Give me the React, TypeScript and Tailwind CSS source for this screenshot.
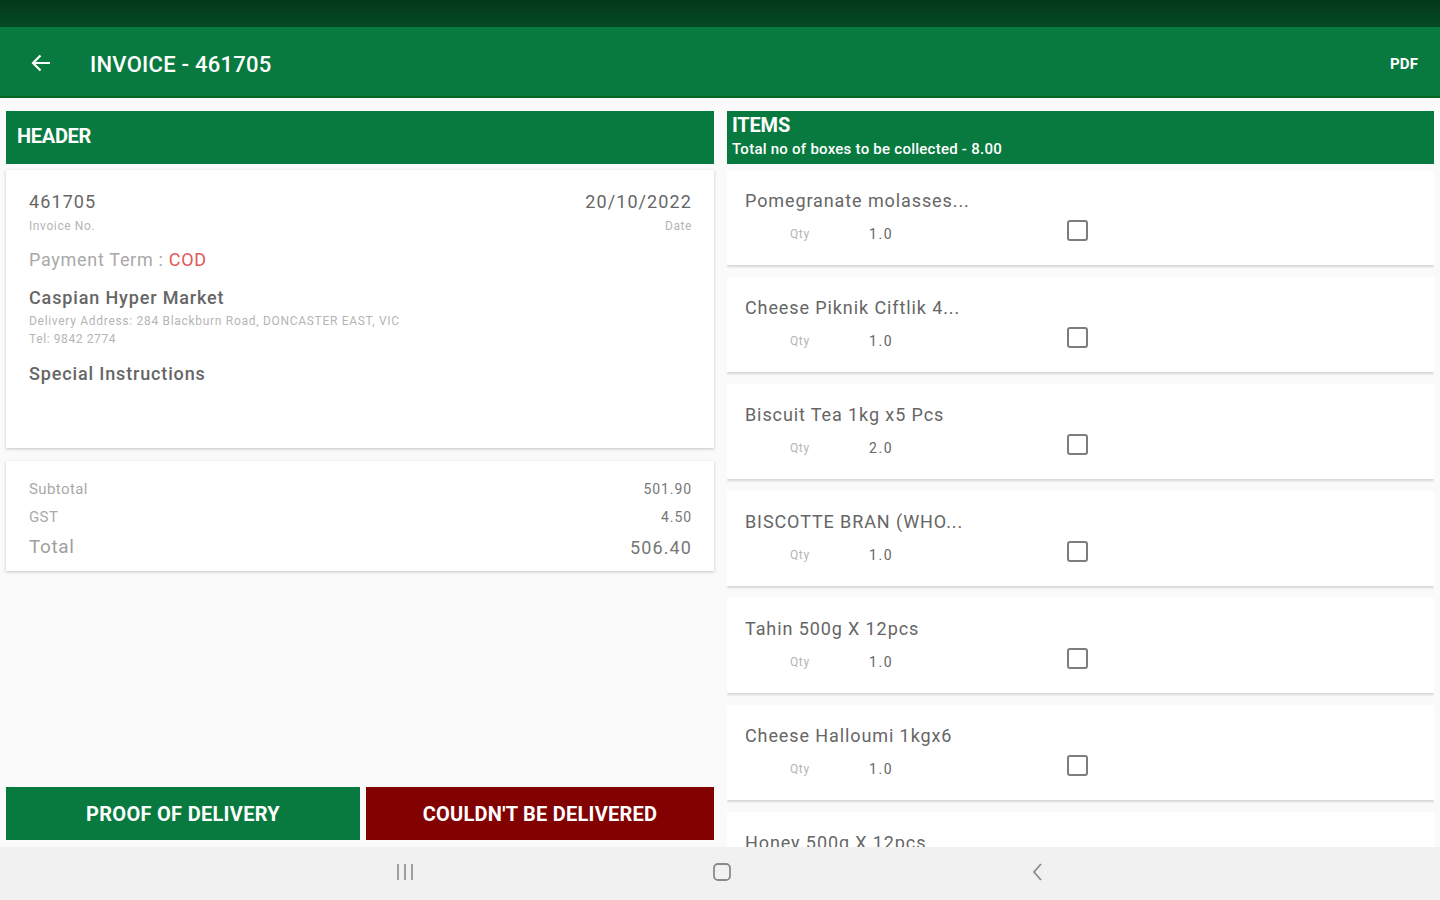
const items = [
  { name: 'Pomegranate molasses...', qty: '1.0' },
  { name: 'Cheese Piknik Ciftlik 4...', qty: '1.0' },
  { name: 'Biscuit Tea 1kg x5 Pcs', qty: '2.0' },
  { name: 'BISCOTTE BRAN (WHO...', qty: '1.0' },
  { name: 'Tahin 500g X 12pcs', qty: '1.0' },
  { name: 'Cheese Halloumi 1kgx6', qty: '1.0' },
  { name: 'Honey 500g X 12pcs', qty: '1.0' },
];

function ItemCard({ name, qty }: { name: string; qty: string }) {
  return (
    <div className="h-[95px] shrink-0 bg-white shadow-[0_2px_2px_rgba(0,0,0,0.14)]">
      <div className="pl-[18px] pt-[20px] text-[18px] leading-[22px] tracking-[0.9px] text-[#666666]">{name}</div>
      <div className="mt-[14px] flex items-center">
        <span className="ml-[63px] w-[79px] text-[12px] leading-[16px] tracking-[0.6px] text-[#b5b5b5]">Qty</span>
        <span className="w-[198px] text-[14px] leading-[16px] tracking-[1.6px] text-[#666666]">{qty}</span>
        <span className="-mt-[7px] h-[21px] w-[21px] rounded-[3px] border-2 border-[#7d7d7d]" />
      </div>
    </div>
  );
}

export default function App() {
  return (
    <div className="flex h-screen flex-col overflow-hidden bg-[#fafafa] font-['Roboto',sans-serif]">
      <div className="h-[27px] shrink-0 bg-gradient-to-b from-[#04381c] to-[#034a22]" />

      <header className="flex h-[71px] shrink-0 items-center border-b-2 border-[#05691f] bg-[#087a3f] pt-[2px] text-white">
        <svg className="ml-[30px] h-[22px] w-[22px]" viewBox="0 0 22 22" fill="none" stroke="currentColor" strokeWidth="2.2">
          <path d="M20 11H3M10.5 3.5 3 11l7.5 7.5" />
        </svg>
        <h1 className="ml-[38px] mt-[4px] text-[22px] font-medium tracking-[0.25px]">INVOICE - 461705</h1>
        <span className="ml-auto mr-[22px] mt-[4px] text-[15px] font-bold tracking-[0.1px]">PDF</span>
      </header>

      <main className="flex min-h-0 flex-1 gap-[13px] pl-[6px] pr-[6px] pt-[13px]">
        <section className="flex w-[708px] shrink-0 flex-col pb-[7px]">
          <div className="flex h-[53px] shrink-0 items-center bg-[#087a3f] pb-[4px] pl-[11px] text-[20px] font-bold tracking-[-0.3px] text-white">
            HEADER
          </div>

          <div className="mt-[6px] h-[278px] shrink-0 bg-white pl-[23px] pr-[22px] pt-[20px] shadow-[0_1px_3px_rgba(0,0,0,0.22)]">
            <div className="flex justify-between text-[18px] leading-[24px] tracking-[1.1px] text-[#666666]">
              <span>461705</span>
              <span>20/10/2022</span>
            </div>
            <div className="flex justify-between text-[12px] leading-[24px] tracking-[0.6px] text-[#b5b5b5]">
              <span>Invoice No.</span>
              <span>Date</span>
            </div>
            <div className="mt-[10px] text-[18px] leading-[24px] tracking-[0.7px] text-[#a9a9a9]">
              Payment Term : <span className="text-[#e2585a]">COD</span>
            </div>
            <div className="mt-[14px] text-[18px] font-medium leading-[24px] tracking-[0.85px] text-[#666666]">Caspian Hyper Market</div>
            <div className="mt-[2px] text-[12px] leading-[18px] tracking-[0.7px] text-[#b5b5b5]">
              Delivery Address: 284 Blackburn Road, DONCASTER EAST, VIC
            </div>
            <div className="text-[12px] leading-[18px] tracking-[0.6px] text-[#b5b5b5]">Tel: 9842 2774</div>
            <div className="mt-[14px] text-[18px] font-medium leading-[24px] tracking-[0.85px] text-[#666666]">Special Instructions</div>
          </div>

          <div className="mt-[13px] h-[110px] shrink-0 bg-white pl-[23px] pr-[22px] pt-[14px] shadow-[0_1px_3px_rgba(0,0,0,0.22)]">
            <div className="flex h-[28px] items-center justify-between text-[15px] tracking-[0.4px] text-[#a9a9a9]">
              <span>Subtotal</span>
              <span className="text-[14px] tracking-[0.9px] text-[#777777]">501.90</span>
            </div>
            <div className="flex h-[28px] items-center justify-between text-[15px] tracking-[0.4px] text-[#a9a9a9]">
              <span>GST</span>
              <span className="text-[14px] tracking-[0.9px] text-[#777777]">4.50</span>
            </div>
            <div className="flex h-[32px] items-center justify-between text-[19px] tracking-[0.6px] text-[#a0a0a0]">
              <span>Total</span>
              <span className="text-[18px] tracking-[1.1px] text-[#777777]">506.40</span>
            </div>
          </div>

          <div className="mt-auto flex h-[53px] shrink-0 gap-[6px]">
            <button className="w-[354px] bg-[#087a3f] text-[20px] font-bold tracking-[0.3px] text-white">PROOF OF DELIVERY</button>
            <button className="flex-1 bg-[#820202] text-[20px] font-bold tracking-[0.25px] text-white">COULDN'T BE DELIVERED</button>
          </div>
        </section>

        <section className="flex min-w-0 flex-1 flex-col">
          <div className="flex h-[53px] shrink-0 flex-col bg-[#087a3f] pl-[5px] pt-[1px] text-white">
            <div className="text-[20px] font-bold leading-[26px] tracking-[-0.2px]">ITEMS</div>
            <div className="text-[15px] font-medium leading-[22px] tracking-[0.25px]">Total no of boxes to be collected - 8.00</div>
          </div>
          <div className="mt-[6px] flex min-h-0 flex-1 flex-col gap-[12px] overflow-hidden">
            {items.map((item) => (
              <ItemCard key={item.name} name={item.name} qty={item.qty} />
            ))}
          </div>
        </section>
      </main>

      <nav className="flex h-[53px] shrink-0 items-center bg-[#f1f1f1] pb-[3px] text-[#8a8a8a]">
        <svg className="ml-[395px] h-[20px] w-[20px]" viewBox="0 0 20 20" fill="none" stroke="currentColor" strokeWidth="1.6">
          <path d="M3 2v16M10 2v16M17 2v16" />
        </svg>
        <svg className="ml-[297px] h-[20px] w-[20px]" viewBox="0 0 20 20" fill="none" stroke="currentColor" strokeWidth="1.8">
          <rect x="2" y="2" width="16" height="16" rx="4" />
        </svg>
        <svg className="ml-[296px] h-[20px] w-[20px]" viewBox="0 0 20 20" fill="none" stroke="currentColor" strokeWidth="1.8">
          <path d="M13 2 6 10l7 8" />
        </svg>
      </nav>
    </div>
  );
}
